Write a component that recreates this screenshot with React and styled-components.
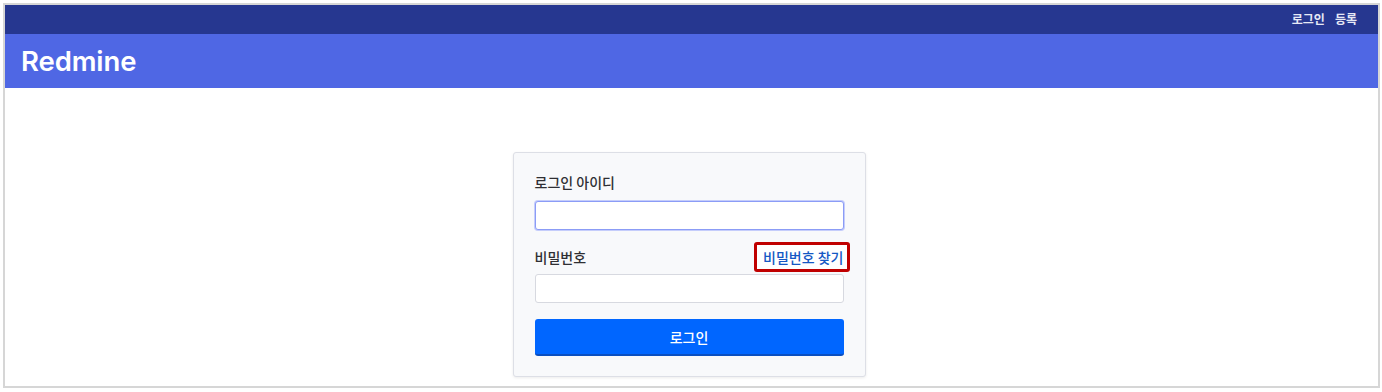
import React from "react";
import styled, { createGlobalStyle } from "styled-components";

const Global = createGlobalStyle`
  html, body { margin: 0; padding: 0; background: #fff; }
  body { font-family: Inter, "Noto Sans CJK KR", sans-serif; }
  * { box-sizing: border-box; }
`;

const Frame = styled.div`
  margin: 3px 2px 4px 3px;
  border: 2px solid #d6d6d6;
  height: 385px;
  display: flex;
  flex-direction: column;
  background: #fff;
`;

const TopMenu = styled.div`
  height: 29px;
  background: #263790;
  display: flex;
  justify-content: flex-end;
  align-items: center;
  padding: 0 21px 0 0;
  gap: 10px;
`;

const TopLink = styled.a`
  color: #e6e9f5;
  font-family: "Noto Sans CJK KR", sans-serif;
  font-size: 12px;
  font-weight: 700;
  text-decoration: none;
  margin-top: -2px;
`;

const Header = styled.div`
  height: 54px;
  background: #4f67e4;
  display: flex;
  align-items: center;
  padding-left: 16px;
`;

const Title = styled.h1`
  margin: 0;
  color: #fff;
  font-family: Inter, sans-serif;
  font-size: 27.5px;
  font-weight: 600;
  letter-spacing: -0.1px;
`;

const Main = styled.div`
  flex: 1;
  display: flex;
  justify-content: center;
  padding-top: 64px;
  padding-right: 5px;
`;

const Box = styled.div`
  width: 353px;
  height: 225px;
  background: #f8f9fb;
  border: 1px solid #dddfe6;
  border-radius: 3px;
  box-shadow: 0 1px 3px rgba(0, 0, 0, 0.08);
  padding: 18px 21px 0 21px;
  display: flex;
  flex-direction: column;
`;

const LabelRow = styled.div`
  display: flex;
  justify-content: space-between;
  align-items: center;
  height: 22px;
  margin-bottom: ${(p) => p.$mb}px;
`;

const Label = styled.label`
  font-family: "Noto Sans CJK KR", sans-serif;
  font-size: 14px;
  font-weight: 500;
  color: #2f2f33;
`;

const Input = styled.div`
  width: 309px;
  height: 29px;
  background: #fff;
  border-radius: 3px;
  border: 1px solid ${(p) => (p.$focus ? "#8b9cf6" : "#d7d9e0")};
  box-shadow: ${(p) => (p.$focus ? "0 0 0 1px #c5cdfb" : "none")};
  margin-bottom: ${(p) => p.$mb}px;
`;

const Highlight = styled.span`
  border: 3px solid #c00000;
  border-radius: 3px;
  padding: 2px 3px 2px 6px;
  margin-right: -6px;
  background: #fff;
  display: inline-flex;
  align-items: center;
`;

const Link = styled.a`
  font-family: "Noto Sans CJK KR", sans-serif;
  font-size: 14px;
  font-weight: 500;
  color: #1558c4;
  text-decoration: none;
`;

const Button = styled.button`
  width: 309px;
  height: 37px;
  background: #0066ff;
  color: #fff;
  border: none;
  border-bottom: 2px solid #0a4fc0;
  border-radius: 3px;
  font-family: "Noto Sans CJK KR", sans-serif;
  font-size: 14px;
  font-weight: 500;
  cursor: pointer;
`;

export default function App() {
  return (
    <>
      <Global />
      <Frame>
        <TopMenu>
          <TopLink>로그인</TopLink>
          <TopLink>등록</TopLink>
        </TopMenu>
        <Header>
          <Title>Redmine</Title>
        </Header>
        <Main>
          <Box>
            <LabelRow $mb={8}>
              <Label>로그인 아이디</Label>
            </LabelRow>
            <Input $focus $mb={16} />
            <LabelRow $mb={6}>
              <Label>비밀번호</Label>
              <Highlight>
                <Link>비밀번호 찾기</Link>
              </Highlight>
            </LabelRow>
            <Input $mb={16} />
            <Button>로그인</Button>
          </Box>
        </Main>
      </Frame>
    </>
  );
}
